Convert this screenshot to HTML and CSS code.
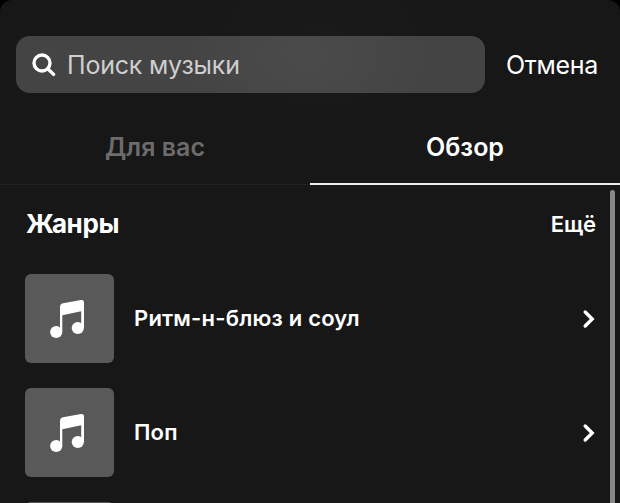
FILE: index.html
```html
<!DOCTYPE html>
<html lang="ru">
<head>
  <meta charset="UTF-8">
  <meta name="viewport" content="width=device-width, initial-scale=1.0">
  <title>Музыка</title>
  <link rel="stylesheet" href="styles.css">
</head>
<body>
  <div class="sheet">
    <!-- Search -->
    <header class="top-bar">
      <div class="search">
        <svg class="search-icon" viewBox="0 0 24 24">
          <circle cx="10" cy="10" r="8"/>
          <path d="M16 16L21.6 21.4"/>
        </svg>
        <span class="search-text">Поиск музыки</span>
      </div>
      <span class="cancel">Отмена</span>
    </header>

    <!-- Tabs -->
    <nav class="tabs">
      <div class="tab">Для вас</div>
      <div class="tab active">Обзор</div>
    </nav>

    <!-- Genres -->
    <main class="genres">
      <div class="genres-head">
        <h2>Жанры</h2>
        <span class="more">Ещё</span>
      </div>
      <div class="genre">
        <div class="cover">
          <svg class="note" viewBox="0 0 36 40">
            <circle cx="7.2" cy="33" r="6.1"/>
            <circle cx="28.8" cy="29" r="6.1"/>
            <path d="M11 33V8.2Q11 5 14 4.3L32 1Q35 .5 35 3.6V29H32.2V12.2L13.3 16.2V33Z"/>
          </svg>
        </div>
        <span class="genre-name">Ритм-н-блюз и соул</span>
        <svg class="chevron" viewBox="0 0 14 20"><path d="M3.2 3L10.2 10L3.2 17"/></svg>
      </div>
      <div class="genre">
        <div class="cover">
          <svg class="note" viewBox="0 0 36 40">
            <circle cx="7.2" cy="33" r="6.1"/>
            <circle cx="28.8" cy="29" r="6.1"/>
            <path d="M11 33V8.2Q11 5 14 4.3L32 1Q35 .5 35 3.6V29H32.2V12.2L13.3 16.2V33Z"/>
          </svg>
        </div>
        <span class="genre-name">Поп</span>
        <svg class="chevron" viewBox="0 0 14 20"><path d="M3.2 3L10.2 10L3.2 17"/></svg>
      </div>
      <div class="genre">
        <div class="cover"></div>
      </div>
      <div class="scrollbar"></div>
    </main>
  </div>
</body>
</html>
```

FILE: styles.css
```css
* {
  margin: 0;
  padding: 0;
  box-sizing: border-box;
}

body {
  height: 503px;
  overflow: hidden;
  background: #000;
  color: #fff;
  font-family: Inter, Roboto, sans-serif;
}

.sheet {
  height: 503px;
  overflow: hidden;
  display: flex;
  flex-direction: column;
  border-radius: 12px 12px 0 0;
  background:
    radial-gradient(ellipse 150px 100px at 320px 40px, #1a1a1a, transparent),
    #171717;
}

/* Search */
.top-bar {
  display: flex;
  align-items: center;
  height: 93px;
  padding: 36px 22px 0 16px;
}

.search {
  display: flex;
  align-items: center;
  width: 469px;
  height: 57px;
  padding-left: 16px;
  border-radius: 14px;
  background: radial-gradient(ellipse 120px 80px at 290px 20px, #4b4b4b, #444);
}

.search-icon {
  width: 24px;
  height: 24px;
  fill: none;
  stroke: #fff;
  stroke-width: 3.4;
  stroke-linecap: round;
}

.search-text {
  margin-left: 11px;
  font-size: 25px;
  letter-spacing: -0.2px;
  color: #cfcfcf;
}

.cancel {
  margin-left: auto;
  font-size: 25px;
  letter-spacing: -0.3px;
}

/* Tabs */
.tabs {
  display: flex;
  height: 92px;
}

.tab {
  flex: 1;
  padding-top: 16px;
  border-bottom: 1px solid #222;
  font-size: 25px;
  font-weight: 600;
  line-height: 76px;
  text-align: center;
  color: #6c6c6c;
}

.tab.active {
  border-bottom: 2px solid #eee;
  color: #fff;
}

/* Genres */
.genres {
  position: relative;
  flex: 1;
  padding: 0 24px 0 25px;
}

.genres-head {
  display: flex;
  align-items: center;
  justify-content: space-between;
  height: 77px;
  margin-bottom: 12px;
}

.genres-head h2 {
  padding-left: 1px;
  font-size: 26px;
  font-weight: 700;
  letter-spacing: -0.4px;
}

.more {
  font-size: 22px;
  font-weight: 600;
}

.genre {
  display: flex;
  align-items: center;
  height: 89px;
  margin-bottom: 25px;
}

.cover {
  display: flex;
  align-items: center;
  justify-content: center;
  width: 89px;
  height: 89px;
  padding-right: 5px;
  border-radius: 6px;
  background: #595959;
}

.note {
  width: 36px;
  height: 40px;
  fill: #fff;
}

.genre-name {
  margin-left: 20px;
  padding-bottom: 2px;
  font-size: 22px;
  font-weight: 600;
  letter-spacing: 0.2px;
}

.chevron {
  width: 14px;
  height: 20px;
  margin-left: auto;
  fill: none;
  stroke: #fff;
  stroke-width: 3.4;
  stroke-linecap: round;
}

.scrollbar {
  position: absolute;
  top: 5px;
  right: 5px;
  bottom: 0;
  width: 5px;
  border-radius: 3px 3px 0 0;
  background: #898989;
}
```
